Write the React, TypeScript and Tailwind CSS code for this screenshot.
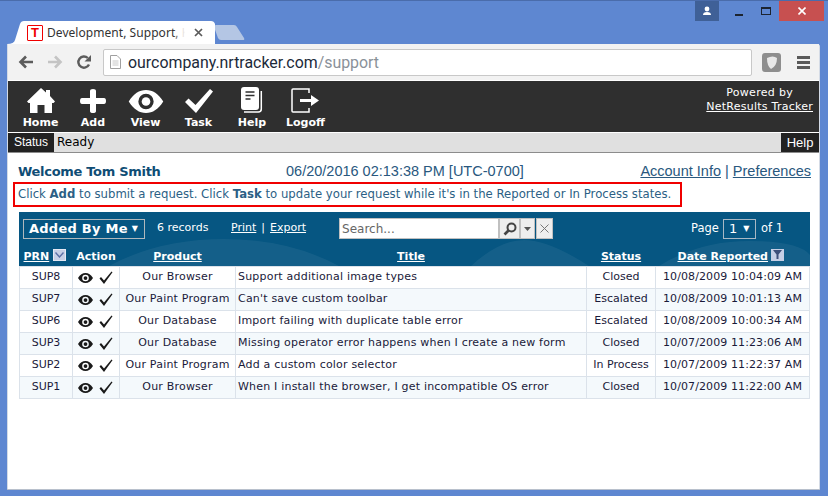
import type { ReactNode } from 'react'

const rows = [
  { prn: 'SUP8', product: 'Our Browser', title: 'Support additional image types', status: 'Closed', date: '10/08/2009 10:04:09 AM' },
  { prn: 'SUP7', product: 'Our Paint Program', title: "Can't save custom toolbar", status: 'Escalated', date: '10/08/2009 10:01:13 AM' },
  { prn: 'SUP6', product: 'Our Database', title: 'Import failing with duplicate table error', status: 'Escalated', date: '10/08/2009 10:00:34 AM' },
  { prn: 'SUP3', product: 'Our Database', title: 'Missing operator error happens when I create a new form', status: 'Closed', date: '10/07/2009 11:23:06 AM' },
  { prn: 'SUP2', product: 'Our Paint Program', title: 'Add a custom color selector', status: 'In Process', date: '10/07/2009 11:22:37 AM' },
  { prn: 'SUP1', product: 'Our Browser', title: 'When I install the browser, I get incompatible OS error', status: 'Closed', date: '10/07/2009 11:22:00 AM' },
]

function EyeIcon({ className }: { className: string }) {
  return (
    <svg viewBox="0 0 36 24" className={className}>
      <path fillRule="evenodd" fill="currentColor" d="M0 12C5 4 11 0 18 0s13 4 18 12c-5 8-11 12-18 12S5 20 0 12zM18 4a8 8 0 100 16 8 8 0 000-16z" />
      <circle cx="18" cy="12" r="4.5" fill="currentColor" />
    </svg>
  )
}

const navIcons: Record<string, ReactNode> = {
  Home: (
    <svg viewBox="0 0 28 25" className="w-[28px] h-[25px]">
      <path fill="#fff" d="M14 0l5 4.5V2h4v6l5 5.5-1.5 1.5H25v10h-7.5v-8h-7v8H3V15H1.500L0 13.500z" />
    </svg>
  ),
  Add: (
    <svg viewBox="0 0 26 24" className="w-[26px] h-[24px]">
      <path fill="#fff" d="M10 2q0-2 3-2t3 2v7h8q2 0 2 3t-2 3h-8v7q0 2-3 2t-3-2v-7H2q-2 0-2-3t2-3h8z" />
    </svg>
  ),
  View: <EyeIcon className="w-[36px] h-[23px] text-white" />,
  Task: (
    <svg viewBox="0 0 28 24" className="w-[28px] h-[24px]">
      <path d="M0 13l3.500-3.500 7 6.500L25 0l3 2.500L11 24z" fill="#fff" />
    </svg>
  ),
  Help: (
    <svg viewBox="0 0 22 26" className="w-[22px] h-[26px]">
      <rect x="0" y="0" width="18" height="23" rx="3" fill="#fff" />
      <path d="M4.500 5h9M4.500 8.500h9M4.500 12h5" stroke="#2f2f2f" strokeWidth="1.700" />
      <path d="M20.300 4v18q0 3-3 3H3" stroke="#fff" strokeWidth="1.500" fill="none" />
    </svg>
  ),
  Logoff: (
    <svg viewBox="0 0 29 25" className="w-[29px] h-[25px]">
      <path d="M18 5V1H2q-1 0-1 1v21q0 1 1 1h16v-4" stroke="#fff" strokeWidth="1.500" fill="none" />
      <path d="M9 11h11V7l8 5.500-8 5.500v-4H9z" fill="#fff" />
    </svg>
  ),
}

const navItems = [
  { label: 'Home', width: 'w-[53px]' },
  { label: 'Add', width: 'w-[52px]' },
  { label: 'View', width: 'w-[53px]' },
  { label: 'Task', width: 'w-[53px]' },
  { label: 'Help', width: 'w-[54px]' },
  { label: 'Logoff', width: 'w-[53px]' },
]

export default function App() {
  return (
    <div className="w-[828px] h-[496px] bg-[#5e87d1] border-t border-[#4a6cab] flex flex-col overflow-hidden font-['Noto_Sans',sans-serif]">
      {/* window controls */}
      <div className="h-[20px] flex justify-end pr-[4px] shrink-0">
        <div className="w-[24px] bg-[#3f6097] flex items-center justify-center">
          <svg viewBox="0 0 10 10" className="w-[10px] h-[10px]">
            <circle cx="5" cy="3" r="2.400" fill="#fff" />
            <path d="M1 9q0-3 4-3t4 3z" fill="#fff" />
          </svg>
        </div>
        <div className="w-[40px] flex items-end justify-center pb-[5px]">
          <div className="w-[8px] h-[2px] bg-[#1c2430]" />
        </div>
        <div className="w-[14px] flex items-center justify-center">
          <div className="w-[10px] h-[8px] border border-t-2 border-[#1c2430]" />
        </div>
        <div className="w-[45px] ml-[6px] bg-[#c75050] flex items-center justify-center">
          <svg viewBox="0 0 8 8" className="w-[8px] h-[8px]">
            <path d="M0.500 0.500l7 7M7.500 0.500l-7 7" stroke="#fff" strokeWidth="1.600" />
          </svg>
        </div>
      </div>

      {/* tab strip */}
      <div className="h-[23px] flex shrink-0 items-end pl-[7px]">
        <div className="relative w-[208px] h-[23px] flex items-center pl-[20px]">
          <svg viewBox="0 0 208 23" className="absolute inset-0 w-[208px] h-[23px]">
            <path d="M0 23q7 0 8-4L13 3q1-3 4-3h187q3 0 4 3l6 16q1 4 6 4z" fill="#fff" />
          </svg>
          <div className="relative w-[16px] h-[16px] border border-[#f00000] rounded-[1px] flex items-center justify-center bg-white text-[#f00000] text-[13px] leading-none font-bold font-['Liberation_Sans',sans-serif] shrink-0">
            T
          </div>
          <div className="relative ml-[4px] whitespace-nowrap text-[12px] leading-[16px] tracking-[0.05px] text-[#333]">
            Development, Support, Kn
          </div>
          {/* title fades out before the close button */}
          <div className="absolute left-[166px] top-0 w-[24px] h-[23px] bg-gradient-to-r from-white/0 via-white to-white" />
          <svg viewBox="0 0 9 9" className="absolute left-[187px] top-[7px] w-[9px] h-[9px]">
            <path d="M1 1l7 7M8 1L1 8" stroke="#5a5a5a" strokeWidth="1.700" />
          </svg>
        </div>
        <svg viewBox="0 0 32 15" className="w-[32px] h-[15px] ml-[-1px] mb-[4px] shrink-0">
          <path d="M0 2q0-2 2-2h18q2 0 3 2l7 11q1 2-1 2H7q-2 0-3-2z" fill="#b4c6e4" />
        </svg>
      </div>

      {/* browser window */}
      <div className="ml-[7px] mr-[8px] mb-[7px] flex-1 flex flex-col bg-white shadow-[0_1px_0_#b8c0cc] border-l border-r border-[#d4dbe6] rounded-tr-[3px]">
        <div className="h-[36px] bg-[#f2f2f2] flex items-center shrink-0 pl-[10px]">
          <svg viewBox="0 0 16 14" className="w-[16px] h-[14px]">
            <path d="M15 7H3M8 1.500L2.500 7 8 12.500" stroke="#5c5c5c" strokeWidth="2.600" fill="none" />
          </svg>
          <svg viewBox="0 0 16 14" className="ml-[13px] w-[16px] h-[14px]">
            <path d="M1 7h12M8 1.500L13.500 7 8 12.500" stroke="#c4c4c4" strokeWidth="2.600" fill="none" />
          </svg>
          <svg viewBox="0 0 16 16" className="ml-[13px] w-[16px] h-[16px]">
            <path d="M13 10.500A5.600 5.600 0 1 1 11.800 4" stroke="#5c5c5c" strokeWidth="2.400" fill="none" />
            <path d="M15 1v6.500H8.500z" fill="#5c5c5c" />
          </svg>
          <div className="ml-[11px] w-[649px] h-[27px] bg-white border border-[#c8c8c8] rounded-[2px] flex items-center pl-[6px]">
            <svg viewBox="0 0 11 14" className="w-[11px] h-[14px] shrink-0">
              <path d="M0.500 0.500h6.500l3.500 3.500v9.500H0.500z" fill="#fff" stroke="#a0a0a0" />
              <path d="M2.500 6h6M2.500 8h6M2.500 10h6" stroke="#c8c8c8" />
            </svg>
            <span className="ml-[7px] mt-[2px] text-[15.9px] leading-[24px] text-[#1c2a3a] font-['Roboto',sans-serif]">
              ourcompany.nrtracker.com<span className="text-[#8a9199]">/support</span>
            </span>
          </div>
          <div className="ml-[10px] w-[19px] h-[19px] rounded-[3px] bg-[#8e8e8e] flex items-center justify-center">
            <svg viewBox="0 0 12 13" className="w-[12px] h-[13px]">
              <path d="M1 2q6-3 10 0 0 8-6 11Q1 10 1 2z" fill="#e8e8e8" />
            </svg>
          </div>
          <div className="ml-[16px] flex flex-col gap-[2px]">
            <div className="w-[13px] h-[3px] bg-[#5a5a5a]" />
            <div className="w-[13px] h-[3px] bg-[#5a5a5a]" />
            <div className="w-[13px] h-[3px] bg-[#5a5a5a]" />
          </div>
        </div>

        {/* app nav */}
        <div className="h-[51px] mt-[1px] bg-[#2f2f2f] flex justify-between shrink-0 pl-[6px] pr-[6px] font-['DejaVu_Sans',sans-serif]">
          <div className="flex">
            {navItems.map((item) => (
              <div key={item.label} className={`${item.width} flex flex-col items-center`}>
                <div className="h-[32px] flex items-end justify-center">{navIcons[item.label]}</div>
                <div className="mt-[3px] text-[11px] leading-[14px] font-bold text-white">{item.label}</div>
              </div>
            ))}
          </div>
          <div className="pt-[5px] text-right text-[11px] leading-[14px] text-white">
            <div className="pr-[20px] tracking-[0.3px]">Powered by</div>
            <a className="underline tracking-[0.25px]">NetResults Tracker</a>
          </div>
        </div>

        {/* status strip */}
        <div className="h-[20px] mt-[1px] bg-[#e0e0e0] border-b border-[#8c8c8c] flex justify-between shrink-0 text-[12px] leading-[19px] font-['Liberation_Sans',sans-serif]">
          <div className="flex">
            <div className="w-[46px] bg-[#222] text-white text-center">Status</div>
            <div className="ml-[3px] text-black font-['DejaVu_Sans',sans-serif] text-[12px]">Ready</div>
          </div>
          <div className="w-[38px] bg-[#222] text-white text-center text-[13px]">Help</div>
        </div>

        {/* page */}
        <div className="flex-1 px-[5px] pt-[10px] flex flex-col">
          <div className="h-[18px] flex items-center pl-[5px] pr-[3px] text-[14.5px] font-['Liberation_Sans',sans-serif]">
            <div className="w-[268px] font-bold font-['DejaVu_Sans',sans-serif] text-[13px] tracking-[-0.3px] text-[#0f4d75]">Welcome Tom Smith</div>
            <div className="text-[#29587e] whitespace-nowrap">06/20/2016 02:13:38 PM [UTC-0700]</div>
            <div className="ml-auto text-right whitespace-nowrap text-[#29587e]">
              <a className="underline">Account Info</a> | <a className="underline">Preferences</a>
            </div>
          </div>

          <div className="mt-[1px] w-[669px] h-[25px] border-2 border-[#f00000] flex items-center pl-[3px] text-[#2c5f85] text-[11.7px] whitespace-nowrap font-['DejaVu_Sans',sans-serif]">
            <span>
              Click <b>Add</b> to submit a request. Click <b>Task</b> to update your request while it's in the Reported or In Process states.
            </span>
          </div>

          {/* records panel */}
          <div className="relative ml-[6px] mt-[5px] w-[791px] bg-[#065682] font-['DejaVu_Sans',sans-serif] text-[11px]">
            {/* faint arcs behind the blue header */}
            <svg viewBox="0 0 791 54" className="absolute left-0 top-0 w-[791px] h-[54px]">
              <path d="M90 54Q140 27 205 27t115 27zM452 54Q480 28 505 28t65 26zM640 54Q680 29 730 29t61 14v11z" fill="#fff" opacity="0.06" />
            </svg>

            <div className="relative h-[33px] flex items-center pl-[4px] text-white whitespace-nowrap">
              <div className="w-[122px] h-[20px] border border-[#b0b8bc] flex items-center pl-[5px] font-bold text-[13px] tracking-[0.25px]">
                Added By Me<span className="ml-[4px] text-[8px]">▼</span>
              </div>
              <div className="ml-[12px] w-[74px]">6 records</div>
              <a className="underline">Print</a>
              <span className="mx-[5px]">|</span>
              <a className="underline">Export</a>
              <div className="ml-[33px] w-[160px] h-[21px] bg-white border border-[#c0c0c0] text-[#666] pl-[2px] text-[12px] leading-[21px]">Search...</div>
              <div className="w-[21px] h-[21px] bg-[#eee] border border-[#c0c0c0] flex items-center justify-center">
                <svg viewBox="0 0 14 14" className="w-[14px] h-[14px]">
                  <circle cx="8.500" cy="5.500" r="4" stroke="#444" strokeWidth="2" fill="none" />
                  <path d="M5.500 8.500L1.500 12.500" stroke="#444" strokeWidth="2.600" />
                </svg>
              </div>
              <div className="w-[15px] h-[21px] bg-[#eee] border border-[#c0c0c0] flex items-center justify-center">
                <svg viewBox="0 0 7 4" className="w-[7px] h-[4px]"><path d="M0 0h7L3.500 4z" fill="#555" /></svg>
              </div>
              <div className="ml-[1px] w-[17px] h-[21px] bg-[#eee] border border-[#c0c0c0] flex items-center justify-center">
                <svg viewBox="0 0 9 9" className="w-[9px] h-[9px]"><path d="M0.500 0.500l8 8M8.500 0.500l-8 8" stroke="#777" /></svg>
              </div>
              <div className="ml-[138px] text-[11.5px]">Page</div>
              <div className="ml-[4px] w-[33px] h-[20px] border border-[#a8b8c4] flex items-center pl-[5px] text-[13px]">
                1<span className="ml-[6px] text-[8px]">▼</span>
              </div>
              <div className="ml-[5px] text-[11.5px]">of 1</div>
            </div>

            <table className="relative w-full table-fixed border-collapse text-[#1a1a3a] text-[11px]">
              <colgroup>
                <col className="w-[53px]" />
                <col className="w-[47px]" />
                <col className="w-[116px]" />
                <col className="w-[351px]" />
                <col className="w-[69px]" />
                <col />
              </colgroup>
              <thead>
                <tr className="h-[21px] text-white font-bold text-[11px]">
                  <th className="text-left pl-[4px] pt-[3px] whitespace-nowrap">
                    <span className="inline-flex items-center">
                      <a className="underline">PRN</a>
                      <span className="ml-[4px] mb-[4px] w-[13px] h-[12px] bg-[#c6cfe6] border border-[#e4e8f4] flex items-center justify-center">
                        <svg viewBox="0 0 9 6" className="w-[9px] h-[6px]"><path d="M0.500 0.500L4.500 5l4-4.500" stroke="#5b6fa6" strokeWidth="1.400" fill="none" /></svg>
                      </span>
                    </span>
                  </th>
                  <th className="text-center font-bold pt-[3px]">Action</th>
                  <th className="text-center pt-[3px]"><a className="underline">Product</a></th>
                  <th className="text-center pt-[3px]"><a className="underline">Title</a></th>
                  <th className="text-center pt-[3px]"><a className="underline">Status</a></th>
                  <th className="text-left pl-[22px] pt-[3px] whitespace-nowrap">
                    <span className="inline-flex items-center">
                      <a className="underline">Date Reported</a>
                      <span className="ml-[3px] mb-[4px] w-[13px] h-[12px] bg-[#c6cfe6] flex items-center justify-center">
                        <svg viewBox="0 0 9 9" className="w-[9px] h-[9px]"><path d="M0 0h9L5.500 4.500V9h-2V4.500z" fill="#3d4f7a" /></svg>
                      </span>
                    </span>
                  </th>
                </tr>
              </thead>
              <tbody>
                {rows.map((row, index) => (
                  <tr key={row.prn} className={`h-[22px] ${index % 2 === 0 ? 'bg-white' : 'bg-[#f4f9fc]'}`}>
                    <td className="border border-[#dbe2ea] text-center">{row.prn}</td>
                    <td className="border border-[#dbe2ea]">
                      <div className="flex items-center justify-center gap-[6px] pt-[1px] pr-[2px] text-[#1a1a1a]">
                        <EyeIcon className="w-[15px] h-[10px]" />
                        <svg viewBox="0 0 14 13" className="w-[14px] h-[13px]">
                          <path d="M0.500 7.500L2 6l3 3.500L12.500 0.500l1 0.800L5 13z" fill="currentColor" />
                        </svg>
                      </div>
                    </td>
                    <td className="border border-[#dbe2ea] text-center whitespace-nowrap tracking-[0.2px]">{row.product}</td>
                    <td className="border border-[#dbe2ea] pl-[2px] whitespace-nowrap tracking-[0.2px]">{row.title}</td>
                    <td className="border border-[#dbe2ea] text-center whitespace-nowrap">{row.status}</td>
                    <td className="border border-[#dbe2ea] text-center whitespace-nowrap tracking-[0.1px]">{row.date}</td>
                  </tr>
                ))}
              </tbody>
            </table>
          </div>
        </div>
      </div>
    </div>
  )
}
